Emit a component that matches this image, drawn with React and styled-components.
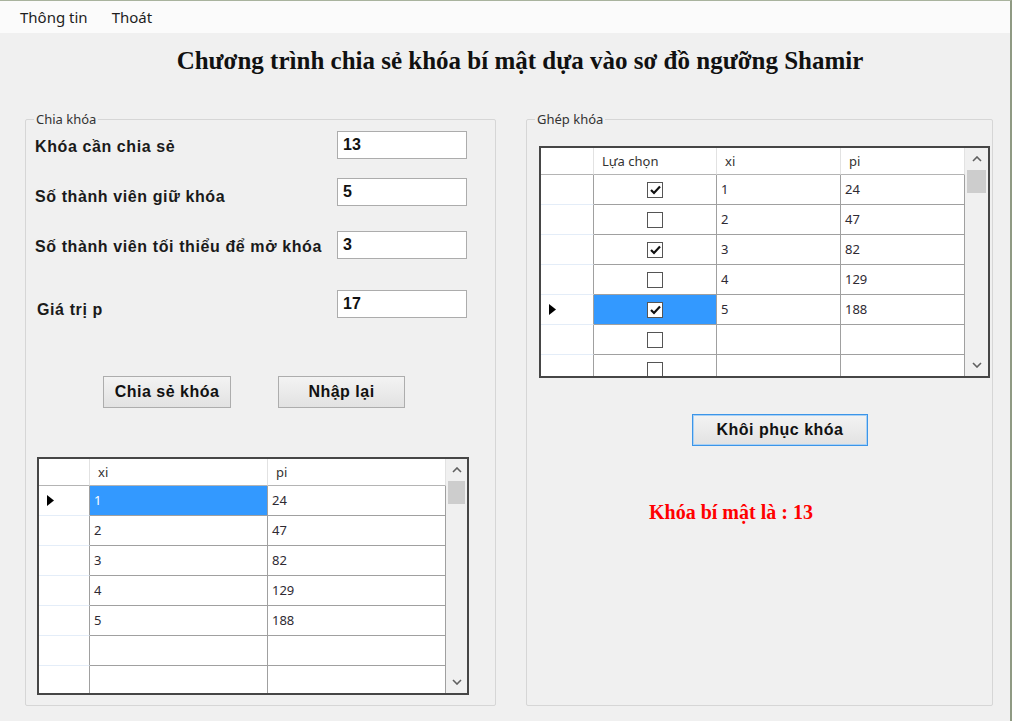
import React from 'react';
import styled, { createGlobalStyle } from 'styled-components';

const GlobalStyle = createGlobalStyle`
  html, body { margin: 0; padding: 0; background: #f0f0f0; }
  #root { width: 1012px; height: 721px; }
  * { box-sizing: border-box; }
`;

const Window = styled.div`
  width: 1012px;
  height: 721px;
  background: #f0f0f0;
  border-top: 1px solid #a9b39e;
  border-right: 2px solid #8f9a83;
  display: flex;
  flex-direction: column;
  overflow: hidden;
  font-family: "Noto Sans", "Liberation Sans", sans-serif;
`;

const MenuBar = styled.div`
  height: 32px;
  flex: none;
  background: #fbfbfb;
  display: flex;
  align-items: center;
  padding-left: 8px;
`;

const MenuItem = styled.span`
  padding: 0 12px;
  font-size: 15px;
  color: #1e1e1e;
  line-height: 20px;
`;

const Title = styled.h1`
  margin: 14px 0 0 0;
  padding-left: 30px;
  height: 28px;
  line-height: 28px;
  text-align: center;
  font-family: "Liberation Serif", "Times New Roman", serif;
  font-weight: bold;
  font-size: 25px;
  color: #111;
`;

const Body = styled.div`
  display: flex;
  gap: 30px;
  padding-left: 25px;
  margin-top: 36px;
`;

const GroupBox = styled.fieldset`
  width: ${p => p.$w}px;
  height: 595px;
  margin: 0;
  padding: 0;
  min-width: 0;
  border: 1px solid #d6d6d6;
  border-radius: 2px;
  display: flex;
  flex-direction: column;
  align-items: flex-start;
`;

const Legend = styled.legend`
  margin-left: 8px;
  padding: 0 2px;
  font-size: 13px;
  line-height: 17px;
  color: #333;
`;

const FieldRow = styled.div`
  display: flex;
  align-items: flex-start;
  height: 28px;
  margin-top: ${p => p.$mt}px;
  padding-left: 9px;
`;

const FieldLabel = styled.label`
  width: 302px;
  padding-left: ${p => p.$pl || 0}px;
  margin-top: ${p => p.$dy}px;
  margin-bottom: -${p => p.$dy}px;
  line-height: 28px;
  font-family: "Liberation Sans", Arial, sans-serif;
  font-weight: bold;
  font-size: 16px;
  letter-spacing: 0.6px;
  color: #1a1a1a;
  white-space: nowrap;
`;

const TextBox = styled.div`
  width: 130px;
  height: 28px;
  flex: none;
  background: #fff;
  border: 1px solid #acacac;
  padding-left: 5px;
  line-height: 26px;
  font-family: "Liberation Sans", Arial, sans-serif;
  font-weight: bold;
  font-size: 16px;
  color: #111;
`;

const ButtonRow = styled.div`
  display: flex;
  gap: 47px;
  margin-top: ${p => p.$mt}px;
  padding-left: ${p => p.$pl}px;
`;

const Button = styled.button`
  width: ${p => p.$w}px;
  height: 32px;
  margin: 0;
  padding: 0;
  border: 1px solid ${p => (p.$focused ? '#3c95e8' : '#adadad')};
  box-shadow: ${p => (p.$focused ? 'inset 0 0 0 1px #a9d1f5' : 'none')};
  background: linear-gradient(#f3f3f3, #e2e2e2);
  font-family: "Liberation Sans", Arial, sans-serif;
  font-weight: bold;
  font-size: 16px;
  letter-spacing: 0.5px;
  color: #111;
`;

const ResultText = styled.div`
  margin-top: ${p => p.$mt}px;
  margin-left: ${p => p.$ml}px;
  line-height: 24px;
  font-family: "Liberation Serif", "Times New Roman", serif;
  font-weight: bold;
  font-size: 20px;
  color: #ff0000;
`;

/* ---------- Data grid ---------- */

const GridFrame = styled.div`
  width: ${p => p.$w}px;
  height: ${p => p.$h}px;
  margin-top: ${p => p.$mt}px;
  margin-left: ${p => p.$ml}px;
  border: 2px solid #464646;
  background: #fff;
  display: flex;
  flex: none;
`;

const GridTable = styled.div`
  flex: 1;
  display: flex;
  flex-direction: column;
  overflow: hidden;
`;

const GridRow = styled.div`
  display: grid;
  grid-template-columns: ${p => p.$cols};
  height: ${p => p.$h}px;
  flex: none;
`;

const HeaderCell = styled.div`
  background: #fff;
  border-right: 1px solid #e2e2e2;
  border-bottom: 1px solid #b4b4b4;
  padding-left: 8px;
  font-size: 13px;
  line-height: 26px;
  color: #333;
  white-space: nowrap;
  overflow: hidden;
`;

const RowHeaderCell = styled.div`
  background: #fff;
  border-right: 1px solid #a0a0a0;
  border-bottom: 1px solid #e4edf8;
  display: flex;
  align-items: center;
  padding-left: 8px;
`;

const DataCell = styled.div`
  background: ${p => (p.$selected ? '#3399ff' : '#fff')};
  color: ${p => (p.$selected ? '#fff' : '#2e2a33')};
  border-right: 1px solid #a0a0a0;
  border-bottom: 1px solid #a0a0a0;
  padding-left: 4px;
  font-size: 13px;
  line-height: 29px;
  display: flex;
  align-items: center;
  justify-content: ${p => (p.$center ? 'center' : 'flex-start')};
`;

const CheckBox = styled.span`
  width: 16px;
  height: 16px;
  border: 1px solid #555;
  background: #fff;
  display: flex;
  align-items: center;
  justify-content: center;
  margin-left: -4px;
`;

const ScrollBar = styled.div`
  width: ${p => p.$w}px;
  flex: none;
  background: #f0f0f0;
  display: flex;
  flex-direction: column;
`;

const ScrollArrow = styled.div`
  height: 22px;
  flex: none;
  display: flex;
  align-items: center;
  justify-content: center;
`;

const ScrollThumb = styled.div`
  height: 23px;
  margin: 0 2px;
  background: #cdcdcd;
  flex: none;
`;

const ScrollTrack = styled.div`
  flex: 1;
`;

const Chevron = ({ up }) => (
  <svg width="10" height="6" viewBox="0 0 10 6">
    <path
      d={up ? 'M1 5 L5 1 L9 5' : 'M1 1 L5 5 L9 1'}
      fill="none"
      stroke="#606060"
      strokeWidth="1.6"
    />
  </svg>
);

const RowPointer = () => (
  <svg width="7" height="11" viewBox="0 0 7 11">
    <path d="M0 0 L7 5.5 L0 11 Z" fill="#000" />
  </svg>
);

const CheckMark = () => (
  <svg width="11" height="10" viewBox="0 0 11 10">
    <path d="M1 5 L4 8 L10 1.5" fill="none" stroke="#111" strokeWidth="2.2" />
  </svg>
);

function DataGrid({ w, h, mt, ml, rowHeaderW, columns, rows, current, selCol, scrollW }) {
  const cols = [rowHeaderW, ...columns.map(c => c.w)].map(x => `${x}px`).join(' ');
  return (
    <GridFrame $w={w} $h={h} $mt={mt} $ml={ml}>
      <GridTable>
        <GridRow $cols={cols} $h={27}>
          <HeaderCell />
          {columns.map(c => (
            <HeaderCell key={c.title}>{c.title}</HeaderCell>
          ))}
        </GridRow>
        {rows.map((r, i) => (
          <GridRow key={i} $cols={cols} $h={30}>
            <RowHeaderCell>{i === current && <RowPointer />}</RowHeaderCell>
            {columns.map((c, j) => {
              const sel = i === current && j === selCol;
              if (c.kind === 'check') {
                return (
                  <DataCell key={j} $selected={sel} $center>
                    <CheckBox>{r[j] && <CheckMark />}</CheckBox>
                  </DataCell>
                );
              }
              return (
                <DataCell key={j} $selected={sel}>
                  {r[j]}
                </DataCell>
              );
            })}
          </GridRow>
        ))}
      </GridTable>
      <ScrollBar $w={scrollW}>
        <ScrollArrow><Chevron up /></ScrollArrow>
        <ScrollThumb />
        <ScrollTrack />
        <ScrollArrow><Chevron /></ScrollArrow>
      </ScrollBar>
    </GridFrame>
  );
}

const shares = [
  ['1', '24'],
  ['2', '47'],
  ['3', '82'],
  ['4', '129'],
  ['5', '188'],
  ['', ''],
  ['', ''],
];

const picks = [
  [true, '1', '24'],
  [false, '2', '47'],
  [true, '3', '82'],
  [false, '4', '129'],
  [true, '5', '188'],
  [false, '', ''],
  [false, '', ''],
];

const fields = [
  { label: 'Khóa cần chia sẻ', value: '13', mt: 3, dy: 2 },
  { label: 'Số thành viên giữ khóa', value: '5', mt: 19, dy: 5 },
  { label: 'Số thành viên tối thiểu để mở khóa', value: '3', mt: 25, dy: 2 },
  { label: 'Giá trị p', value: '17', mt: 31, dy: 6, pl: 2 },
];

export default function App() {
  return (
    <>
      <GlobalStyle />
      <Window>
        <MenuBar>
          <MenuItem>Thông tin</MenuItem>
          <MenuItem>Thoát</MenuItem>
        </MenuBar>
        <Title>Chương trình chia sẻ khóa bí mật dựa vào sơ đồ ngưỡng Shamir</Title>
        <Body>
          <GroupBox $w={471}>
            <Legend>Chia khóa</Legend>
            {fields.map(f => (
              <FieldRow key={f.label} $mt={f.mt}>
                <FieldLabel $dy={f.dy} $pl={f.pl}>{f.label}</FieldLabel>
                <TextBox>{f.value}</TextBox>
              </FieldRow>
            ))}
            <ButtonRow $mt={58} $pl={77}>
              <Button $w={128}>Chia sẻ khóa</Button>
              <Button $w={127}>Nhập lại</Button>
            </ButtonRow>
            <DataGrid
              w={432}
              h={238}
              mt={49}
              ml={11}
              rowHeaderW={51}
              scrollW={21}
              columns={[
                { title: 'xi', w: 178 },
                { title: 'pi', w: 178 },
              ]}
              rows={shares}
              current={0}
              selCol={0}
            />
          </GroupBox>
          <GroupBox $w={467}>
            <Legend>Ghép khóa</Legend>
            <DataGrid
              w={451}
              h={232}
              mt={18}
              ml={12}
              rowHeaderW={53}
              scrollW={23}
              columns={[
                { title: 'Lựa chọn', w: 123, kind: 'check' },
                { title: 'xi', w: 124 },
                { title: 'pi', w: 124 },
              ]}
              rows={picks}
              current={4}
              selCol={0}
            />
            <ButtonRow $mt={36} $pl={165}>
              <Button $w={176} $focused>Khôi phục khóa</Button>
            </ButtonRow>
            <ResultText $mt={54} $ml={122}>Khóa bí mật là : 13</ResultText>
          </GroupBox>
        </Body>
      </Window>
    </>
  );
}
